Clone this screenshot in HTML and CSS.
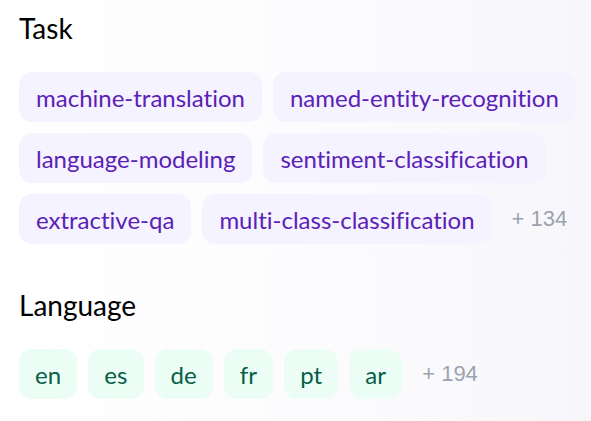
FILE: index.html
```html
<!DOCTYPE html>
<html>
<head>
<meta charset="utf-8">
<link rel="stylesheet" href="styles.css">
</head>
<body>
<div class="panel">
  <section class="group">
    <h2 class="group-title">Task</h2>
    <div class="tags">
      <span class="tag tag-task">machine-translation</span>
      <span class="tag tag-task">named-entity-recognition</span>
      <span class="tag tag-task">language-modeling</span>
      <span class="tag tag-task">sentiment-classification</span>
      <span class="tag tag-task">extractive-qa</span>
      <span class="tag tag-task">multi-class-classification</span>
      <span class="more">+ 134</span>
    </div>
  </section>
  <section class="group">
    <h2 class="group-title">Language</h2>
    <div class="tags">
      <span class="tag tag-lang">en</span>
      <span class="tag tag-lang">es</span>
      <span class="tag tag-lang">de</span>
      <span class="tag tag-lang">fr</span>
      <span class="tag tag-lang">pt</span>
      <span class="tag tag-lang">ar</span>
      <span class="more">+ 194</span>
    </div>
  </section>
</div>
</body>
</html>
```
FILE: styles.css
```css
html, body {
  margin: 0;
  padding: 0;
}
body {
  width: 591px;
  height: 421px;
  overflow: hidden;
  background: linear-gradient(to right, #ffffff 0%, #fcfcfe 50%, #f7f7fb 100%);
  font-family: "Lato", "Noto Sans", sans-serif;
  font-variant-ligatures: none;
}
.panel {
  padding: 12px 0 0 19px;
  display: flex;
  flex-direction: column;
  gap: 45px;
}
.group-title {
  margin: 0 0 28px 0;
  font-size: 28px;
  line-height: 32px;
  font-weight: 400;
  color: #000;
}
.tags {
  display: flex;
  flex-wrap: wrap;
  align-items: center;
  gap: 11px;
}
.tag {
  height: 50px;
  display: inline-flex;
  align-items: center;
  padding: 0 17px;
  border-radius: 13px;
  font-size: 24px;
}
.tag-task {
  background: #f5f3ff;
  color: #5b21b6;
}
.tag-lang {
  background: #ecfdf5;
  color: #065f46;
  padding: 0 16px;
  letter-spacing: 0.1px;
}
.more {
  padding-left: 9px;
  font-family: "Liberation Sans", Arial, sans-serif;
  font-size: 22px;
  color: #9ca3af;
}
```
